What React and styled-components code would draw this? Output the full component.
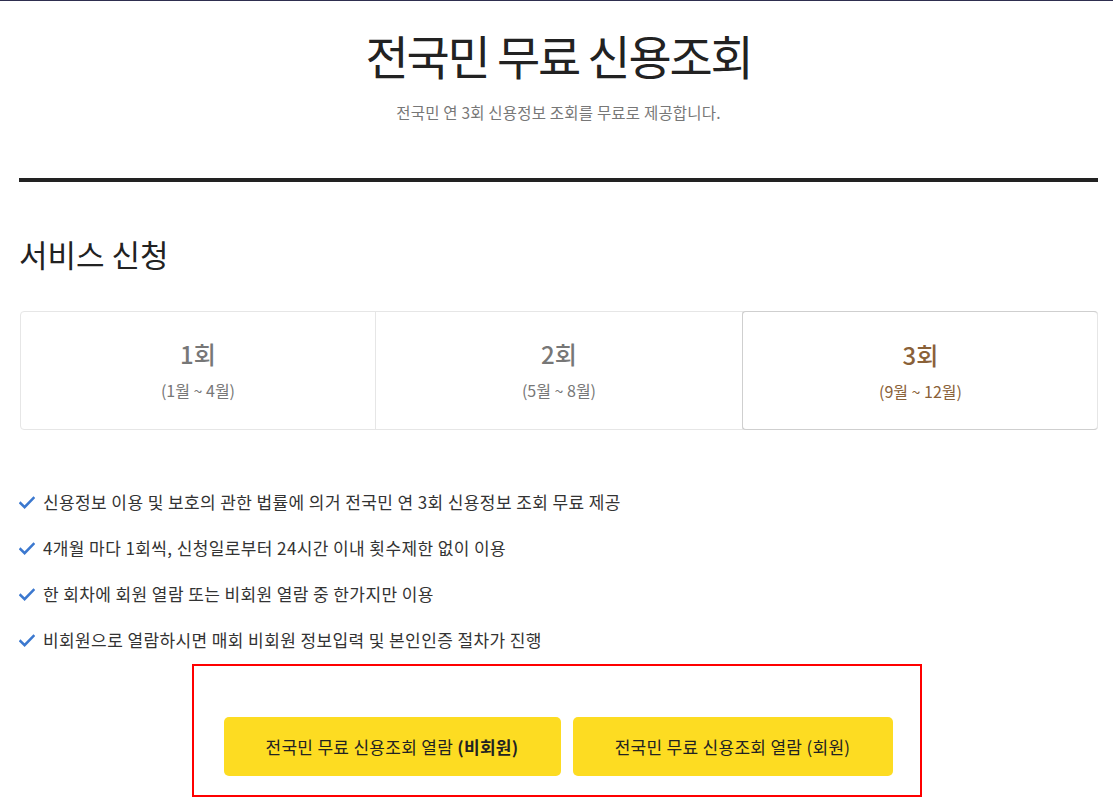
import React, { useState } from 'react'
import styled, { createGlobalStyle } from 'styled-components'

const GlobalStyle = createGlobalStyle`
  body {
    margin: 0;
    background: #fff;
    font-family: "Noto Sans CJK KR", "Noto Sans", sans-serif;
    color: #222;
  }
`

const rounds = [
  { name: '1회', period: '(1월 ~ 4월)' },
  { name: '2회', period: '(5월 ~ 8월)' },
  { name: '3회', period: '(9월 ~ 12월)' },
]

const notes = [
  '신용정보 이용 및 보호의 관한 법률에 의거 전국민 연 3회 신용정보 조회 무료 제공',
  '4개월 마다 1회씩, 신청일로부터 24시간 이내 횟수제한 없이 이용',
  '한 회차에 회원 열람 또는 비회원 열람 중 한가지만 이용',
  '비회원으로 열람하시면 매회 비회원 정보입력 및 본인인증 절차가 진행',
]

function Check() {
  return (
    <svg width="16" height="14" viewBox="0 0 16 14">
      <path d="M1.5 7.2 L5.6 11.2 L14.5 2" fill="none" stroke="#3b78cf" strokeWidth="2.6" strokeLinecap="square" />
    </svg>
  )
}

export default function App() {
  const [active, setActive] = useState(2)
  return (
    <Page>
      <GlobalStyle />
      <TopLine />
      <Wrap>
        <Header>
          <Title>전국민 무료 신용조회</Title>
          <Sub>전국민 연 3회 신용정보 조회를 무료로 제공합니다.</Sub>
        </Header>
        <SectionTitle>서비스 신청</SectionTitle>
        <Tabs>
          {rounds.map((r, i) => (
            <Tab key={r.name} $active={i === active} onClick={() => setActive(i)}>
              <TabName>{r.name}</TabName>
              <TabPeriod>{r.period}</TabPeriod>
            </Tab>
          ))}
        </Tabs>
        <Notes>
          {notes.map((n) => (
            <Note key={n}>
              <Check />
              <span>{n}</span>
            </Note>
          ))}
        </Notes>
        <ButtonBox>
          <YellowButton $wide>
            전국민 무료 신용조회 열람 <b>(비회원)</b>
          </YellowButton>
          <YellowButton>전국민 무료 신용조회 열람 (회원)</YellowButton>
        </ButtonBox>
      </Wrap>
    </Page>
  )
}

const Page = styled.div`
  width: 1113px;
  height: 800px;
  overflow: hidden;
`

const TopLine = styled.div`
  height: 1px;
  background: #2e2e4f;
`

const Wrap = styled.div`
  margin: 0 15px 0 19px;
`

const Header = styled.div`
  display: flex;
  flex-direction: column;
  align-items: center;
  padding-top: 22px;
  padding-bottom: 56px;
  border-bottom: 4px solid #222;
`

const Title = styled.h1`
  margin: 0;
  font-size: 47px;
  font-weight: 400;
  line-height: 64px;
  color: #222;
  letter-spacing: -2.2px;
`

const Sub = styled.p`
  margin: 15px 0 0;
  font-size: 15.5px;
  line-height: 20px;
  color: #777;
  letter-spacing: 0.2px;
`

const SectionTitle = styled.h2`
  margin: 50px 0 0;
  font-size: 31px;
  font-weight: 400;
  line-height: 44px;
  color: #222;
`

const Tabs = styled.div`
  display: grid;
  grid-template-columns: 355px 367px 1fr;
  margin: 35px 0 0 1px;
  border: 1px solid #e6e6e6;
  border-radius: 4px;
`

const Tab = styled.div`
  display: flex;
  flex-direction: column;
  align-items: center;
  height: 117px;
  padding-top: 25px;
  box-sizing: border-box;
  cursor: pointer;
  color: ${(p) => (p.$active ? '#8a6138' : '#777')};
  border-right: 1px solid #e6e6e6;
  &:last-child {
    border-right: none;
  }
  ${(p) =>
    p.$active &&
    `
    margin: -1px;
    height: 119px;
    padding-top: 26px;
    border: 1px solid #cfcfcf;
    border-radius: 4px;
  `}
`

const TabName = styled.div`
  font-size: 24px;
  font-weight: 500;
  line-height: 34px;
`

const TabPeriod = styled.div`
  margin-top: 8px;
  font-size: 16px;
  line-height: 22px;
`

const Notes = styled.ul`
  list-style: none;
  margin: 60px 0 0;
  padding: 0;
  display: flex;
  flex-direction: column;
  gap: 22px;
`

const Note = styled.li`
  display: flex;
  align-items: center;
  gap: 8px;
  font-size: 17px;
  line-height: 24px;
  letter-spacing: 0.4px;
  color: #333;
  svg {
    flex: none;
    margin-top: 2px;
  }
`

const ButtonBox = styled.div`
  display: flex;
  gap: 12px;
  width: 730px;
  height: 133px;
  box-sizing: border-box;
  margin: 12px auto 0;
  padding: 51px 27px 0 30px;
  border: 2px solid #ff0000;
  position: relative;
  left: -2px;
`

const YellowButton = styled.button`
  width: ${(p) => (p.$wide ? '337px' : '320px')};
  height: 59px;
  border: none;
  border-radius: 5px;
  background: #fddc22;
  font-family: "Noto Sans CJK KR", "Noto Sans", sans-serif;
  font-size: 17px;
  letter-spacing: 0.3px;
  color: #222;
  cursor: pointer;
  b {
    font-weight: 700;
  }
`
